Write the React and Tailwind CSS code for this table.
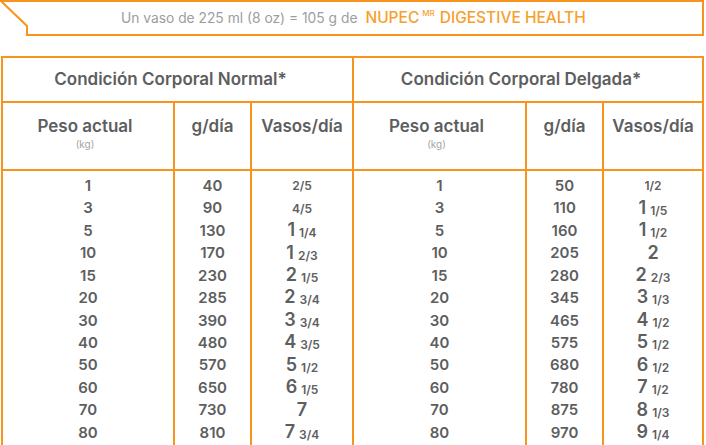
const FONT = { fontFamily: "Inter, 'Open Sans', sans-serif" };

const normal = [
  ["1", "40", "", "2/5"],
  ["3", "90", "", "4/5"],
  ["5", "130", "1", "1/4"],
  ["10", "170", "1", "2/3"],
  ["15", "230", "2", "1/5"],
  ["20", "285", "2", "3/4"],
  ["30", "390", "3", "3/4"],
  ["40", "480", "4", "3/5"],
  ["50", "570", "5", "1/2"],
  ["60", "650", "6", "1/5"],
  ["70", "730", "7", ""],
  ["80", "810", "7", "3/4"],
];

const delgada = [
  ["1", "50", "", "1/2"],
  ["3", "110", "1", "1/5"],
  ["5", "160", "1", "1/2"],
  ["10", "205", "2", ""],
  ["15", "280", "2", "2/3"],
  ["20", "345", "3", "1/3"],
  ["30", "465", "4", "1/2"],
  ["40", "575", "5", "1/2"],
  ["50", "680", "6", "1/2"],
  ["60", "780", "7", "1/2"],
  ["70", "875", "8", "1/3"],
  ["80", "970", "9", "1/4"],
];

function Vasos({ whole, frac }) {
  return (
    <div className="flex items-baseline justify-center gap-[4px] relative top-[-1px]">
      {whole && <span className="text-[18px] leading-[18px]">{whole}</span>}
      {frac && <span className="text-[12px] leading-[14px] relative top-[1px]">{frac}</span>}
    </div>
  );
}

function Half({ title, rows, widths, last }) {
  return (
    <div className={`flex flex-col ${last ? "w-[348px]" : "w-[351px] border-r-2 border-[#f7941d]"}`}>
      <div className="h-[45px] border-b-2 border-[#f7941d] flex items-center justify-center pr-[14px] text-[17px] font-semibold text-[#5d5e60]">
        {title}
      </div>
      <div className="h-[68px] border-b-2 border-[#f7941d] flex text-[17px] font-semibold text-[#5d5e60]">
        <div className={`${widths[0]} border-r-2 border-[#f7941d] flex flex-col items-center pt-[12px] pr-[6px]`}>
          <span className="leading-[22px]">Peso actual</span>
          <span className="text-[10px] font-normal text-[#a5a5a5] leading-[14px]">(kg)</span>
        </div>
        <div className={`${widths[1]} border-r-2 border-[#f7941d] flex justify-center pt-[12px]`}>
          <span className="leading-[22px]">g/día</span>
        </div>
        <div className={`${widths[2]} flex justify-center pt-[12px]`}>
          <span className="leading-[22px]">Vasos/día</span>
        </div>
      </div>
      <div className="flex text-[15px] font-semibold text-[#5d5e60]">
        <div className={`${widths[0]} border-r-2 border-[#f7941d] pt-[4px] pb-[10px]`}>
          {rows.map((r) => (
            <div key={r[0]} className="h-[22.45px] flex items-center justify-center">{r[0]}</div>
          ))}
        </div>
        <div className={`${widths[1]} border-r-2 border-[#f7941d] pt-[4px]`}>
          {rows.map((r) => (
            <div key={r[0]} className="h-[22.45px] flex items-center justify-center">{r[1]}</div>
          ))}
        </div>
        <div className={`${widths[2]} pt-[4px]`}>
          {rows.map((r) => (
            <div key={r[0]} className="h-[22.45px] flex items-center justify-center">
              <Vasos whole={r[2]} frac={r[3]} />
            </div>
          ))}
        </div>
      </div>
    </div>
  );
}

export default function App() {
  return (
    <div className="w-[706px] h-[445px] overflow-hidden bg-white" style={FONT}>
      {/* banner */}
      <div className="relative h-[37px] flex items-center pl-[121px]">
        <svg className="absolute inset-0" width="706" height="37" viewBox="0 0 706 37">
          <polygon points="1,1 703,1 703,35 27,35 27,26" fill="none" stroke="#f7941d" strokeWidth="2" />
        </svg>
        <span className="relative text-[13.8px] text-[#9d9d9d] mt-[-1px]">Un vaso de 225 ml (8 oz) = 105 g de</span>
        <span className="relative ml-[8px] text-[15.5px] font-medium text-[#f6a02d] mt-[-1px] flex items-start">
          NUPEC
          <span className="text-[8px] ml-[3px] mr-[5px] mt-[1px]">MR</span>
          DIGESTIVE HEALTH
        </span>
      </div>

      {/* table */}
      <div className="mt-[19px] ml-[1px] w-[703px] border-2 border-b-0 border-[#f7941d] flex">
        <Half
          title="Condición Corporal Normal*"
          rows={normal}
          widths={["w-[172px]", "w-[77px]", "w-[100px]"]}
        />
        <Half
          title="Condición Corporal Delgada*"
          rows={delgada}
          widths={["w-[173px]", "w-[77px]", "w-[98px]"]}
          last
        />
      </div>
    </div>
  );
}
